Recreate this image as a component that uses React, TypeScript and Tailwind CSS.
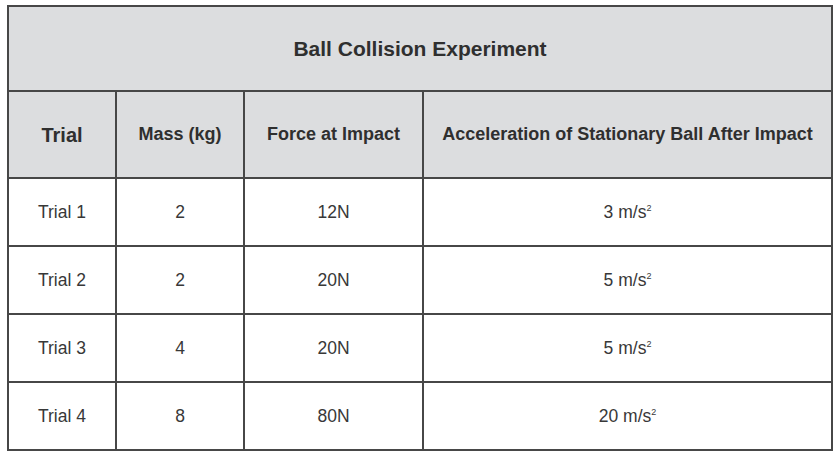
import React from 'react';

const rows = [
  { trial: 'Trial 1', mass: '2', force: '12N', accel: '3' },
  { trial: 'Trial 2', mass: '2', force: '20N', accel: '5' },
  { trial: 'Trial 3', mass: '4', force: '20N', accel: '5' },
  { trial: 'Trial 4', mass: '8', force: '80N', accel: '20' },
];

const headCell = 'bg-[#dcdddf] flex items-center justify-center font-bold text-[#2f2f2f] text-[18px]';
const bodyCell = 'bg-white flex items-center justify-center text-[#383838] text-[17.5px]';

const App = () => {
  return (
    <div className="min-h-screen bg-white pt-[5px] pl-[7px] font-['Liberation_Sans',Arial,sans-serif]">
      <div className="grid w-[826px] grid-cols-[106px_126px_177px_407px] grid-rows-[83px_85px_66px_66px_66px_66px] gap-[2px] bg-[#474747] p-[2px]">
        <div className={`${headCell} col-span-4 text-[21px]`}>Ball Collision Experiment</div>

        <div className={`${headCell} text-[20px]`}>Trial</div>
        <div className={headCell}>Mass (kg)</div>
        <div className={headCell}>Force at Impact</div>
        <div className={headCell}>Acceleration of Stationary Ball After Impact</div>

        {rows.map((r) => (
          <React.Fragment key={r.trial}>
            <div className={bodyCell}>{r.trial}</div>
            <div className={bodyCell}>{r.mass}</div>
            <div className={bodyCell}>{r.force}</div>
            <div className={bodyCell}>
              <span>
                {r.accel} m/s<sup className="text-[9px] -top-[7px]">2</sup>
              </span>
            </div>
          </React.Fragment>
        ))}
      </div>
    </div>
  );
};

export default App;
